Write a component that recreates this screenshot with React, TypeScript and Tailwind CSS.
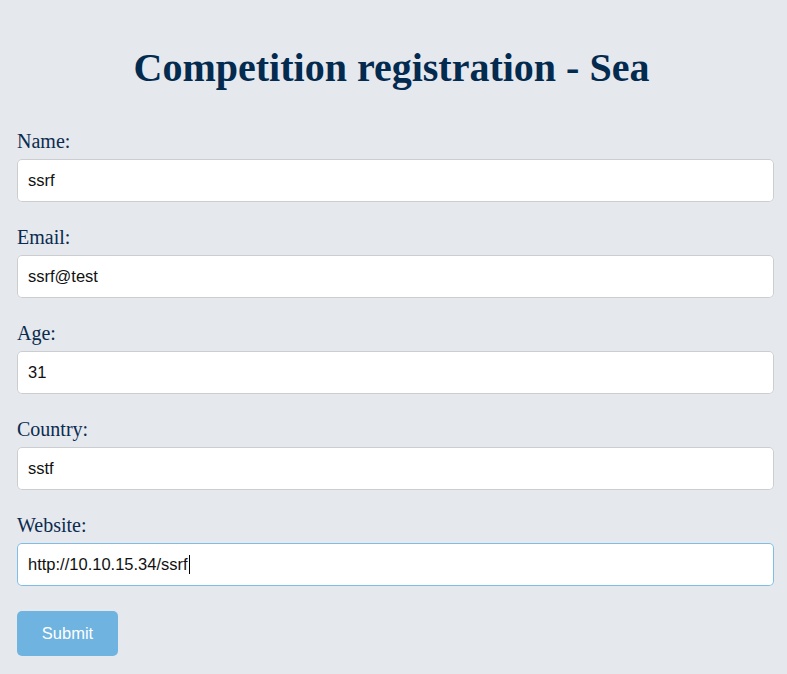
import React from "react";

const fields = [
  { label: "Name:", value: "ssrf" },
  { label: "Email:", value: "ssrf@test" },
  { label: "Age:", value: "31" },
  { label: "Country:", value: "sstf" },
  { label: "Website:", value: "http://10.10.15.34/ssrf", focused: true },
];

export default function App() {
  return (
    <div className="min-h-[674px] w-full bg-[#e5e8ed] pt-[45px] font-['Liberation_Sans',Arial,sans-serif]">
      <h1 className="pl-[13px] pr-[17px] text-center font-['Liberation_Serif',serif] text-[40px] leading-[46px] font-bold text-[#032a4f]">
        Competition registration - Sea
      </h1>
      <form className="mt-[39px] flex flex-col pl-[17px] pr-[13px]">
        {fields.map((f) => (
          <div key={f.label} className="mb-[24px] flex flex-col">
            <label className="mb-[6px] h-[23px] font-['Liberation_Serif',serif] text-[20px] leading-[23px] text-[#0b2b4f]">
              {f.label}
            </label>
            {f.focused ? (
              <div className="flex h-[43px] w-full items-center rounded-[5px] bg-white px-[11px] text-[16.5px] text-[#111] shadow-[inset_0_0_0_1px_#7fbde6]">
                <span>{f.value}</span>
                <span className="ml-[1px] inline-block h-[19px] w-[1px] bg-black" />
              </div>
            ) : (
              <div className="flex h-[43px] w-full items-center rounded-[5px] bg-white px-[11px] text-[16.5px] text-[#111] shadow-[inset_0_0_0_1px_#cbcdd1]">
                <span>{f.value}</span>
              </div>
            )}
          </div>
        ))}
        <button
          type="button"
          className="mt-px h-[45px] w-[101px] rounded-[5px] bg-[#6fb3e0] text-[16.5px] text-white"
        >
          Submit
        </button>
      </form>
    </div>
  );
}
